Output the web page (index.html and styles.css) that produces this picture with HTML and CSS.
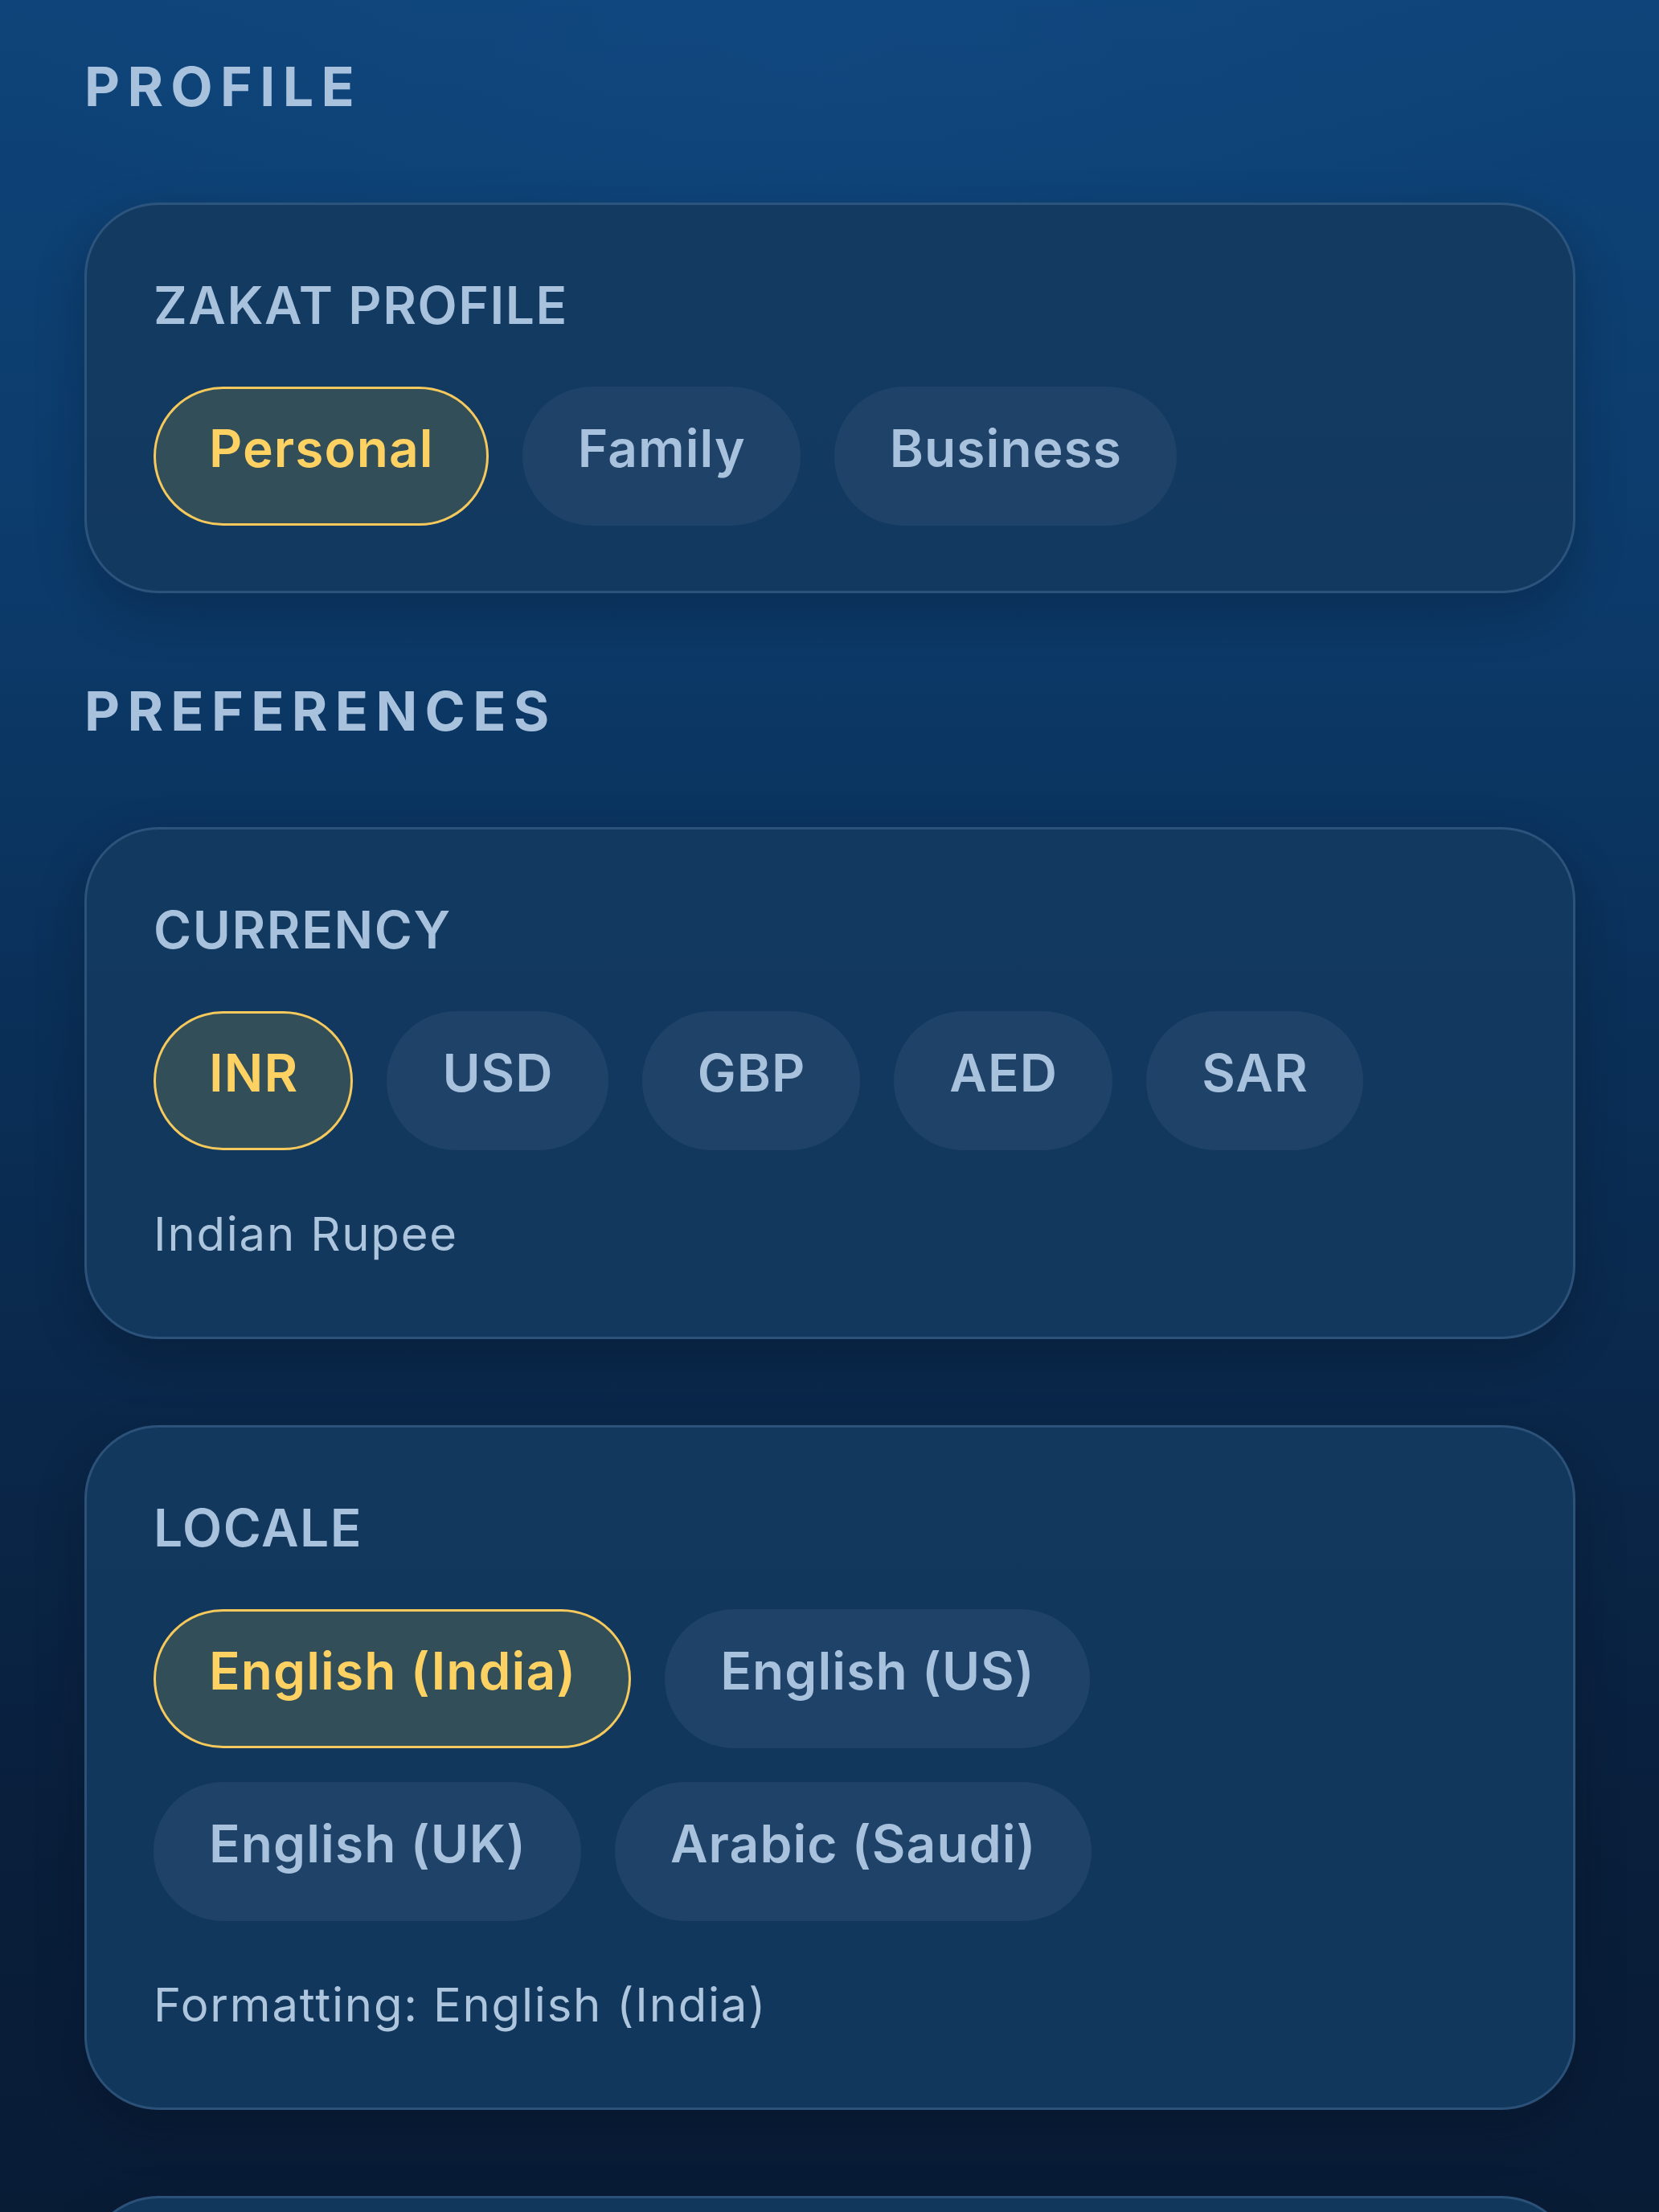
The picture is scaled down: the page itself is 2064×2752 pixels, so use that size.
FILE: index.html
```html
<!DOCTYPE html>
<html lang="en">
<head>
<meta charset="utf-8">
<title>Settings</title>
<link rel="stylesheet" href="styles.css">
</head>
<body>
<main class="page">
  <h2 class="section-title">PROFILE</h2>
  <section class="card">
    <h3 class="card-label">ZAKAT PROFILE</h3>
    <div class="chips">
      <button class="chip selected">Personal</button>
      <button class="chip">Family</button>
      <button class="chip">Business</button>
    </div>
  </section>

  <h2 class="section-title">PREFERENCES</h2>
  <section class="card">
    <h3 class="card-label">CURRENCY</h3>
    <div class="chips">
      <button class="chip selected">INR</button>
      <button class="chip">USD</button>
      <button class="chip">GBP</button>
      <button class="chip">AED</button>
      <button class="chip">SAR</button>
    </div>
    <p class="caption">Indian Rupee</p>
  </section>

  <section class="card card-gap">
    <h3 class="card-label">LOCALE</h3>
    <div class="chips chips-narrow">
      <button class="chip selected">English (India)</button>
      <button class="chip">English (US)</button>
      <button class="chip">English (UK)</button>
      <button class="chip">Arabic (Saudi)</button>
    </div>
    <p class="caption">Formatting: English (India)</p>
  </section>

  <section class="card card-gap card-next"></section>
</main>
</body>
</html>
```
FILE: styles.css
```css
html, body {
  margin: 0;
  padding: 0;
}
body {
  width: 2064px;
  height: 2752px;
  overflow: hidden;
  background:
    radial-gradient(ellipse 1400px 900px at 1000px 0px, rgba(20, 80, 140, 0.3), rgba(20, 80, 140, 0) 70%),
    linear-gradient(180deg, #0e4479 0%, #0c3b6b 25%, #0a3059 45%, #0a284b 62%, #091e3a 85%, #091c36 100%);
  font-family: Inter, "Noto Sans", "Liberation Sans", sans-serif;
  color: #a8c1dd;
}
.page {
  box-sizing: border-box;
  height: 2752px;
  overflow: hidden;
  padding: 73px 104px 0 105px;
  display: flex;
  flex-direction: column;
}
.section-title {
  margin: 0 0 111px 0;
  font-size: 68px;
  line-height: 68px;
  font-weight: 700;
  letter-spacing: 0.137em;
  color: #a8c1dd;
}
.card + .section-title {
  margin-top: 112px;
}
.card {
  flex: none;
  border: 3px solid rgba(110, 150, 195, 0.28);
  border-radius: 92px;
  background: rgba(19, 57, 96, 0.92);
  box-shadow: 0 24px 60px rgba(2, 10, 25, 0.25);
  padding: 93px 88px 81px 83px;
}
.card-gap {
  margin-top: 107px;
}
.card-next {
  height: 300px;
  padding: 0;
}
.card-label {
  margin: 0 0 69px 0;
  font-size: 64px;
  line-height: 64px;
  font-weight: 600;
  letter-spacing: 0.025em;
  color: #a8c1dd;
}
.chips {
  display: flex;
  flex-wrap: wrap;
  gap: 42px;
}
.chips-narrow {
  max-width: 1200px;
}
.chip {
  box-sizing: border-box;
  height: 173px;
  border: 3px solid transparent;
  border-radius: 90px;
  background: #1f4368;
  color: #a8c1dd;
  font-family: Inter, "Noto Sans", "Liberation Sans", sans-serif;
  font-size: 64px;
  line-height: 64px;
  font-weight: 600;
  letter-spacing: 1.1px;
  padding: 41px 65px 61px 66px;
  margin: 0;
  cursor: pointer;
}
.chip.selected {
  background: #324f59;
  border-color: #f6c95d;
  color: #fdd263;
}
.caption {
  margin: 75px 0 18px 0;
  font-size: 58px;
  line-height: 58px;
  font-weight: 400;
  letter-spacing: 1.8px;
  color: #aec5de;
}
```
